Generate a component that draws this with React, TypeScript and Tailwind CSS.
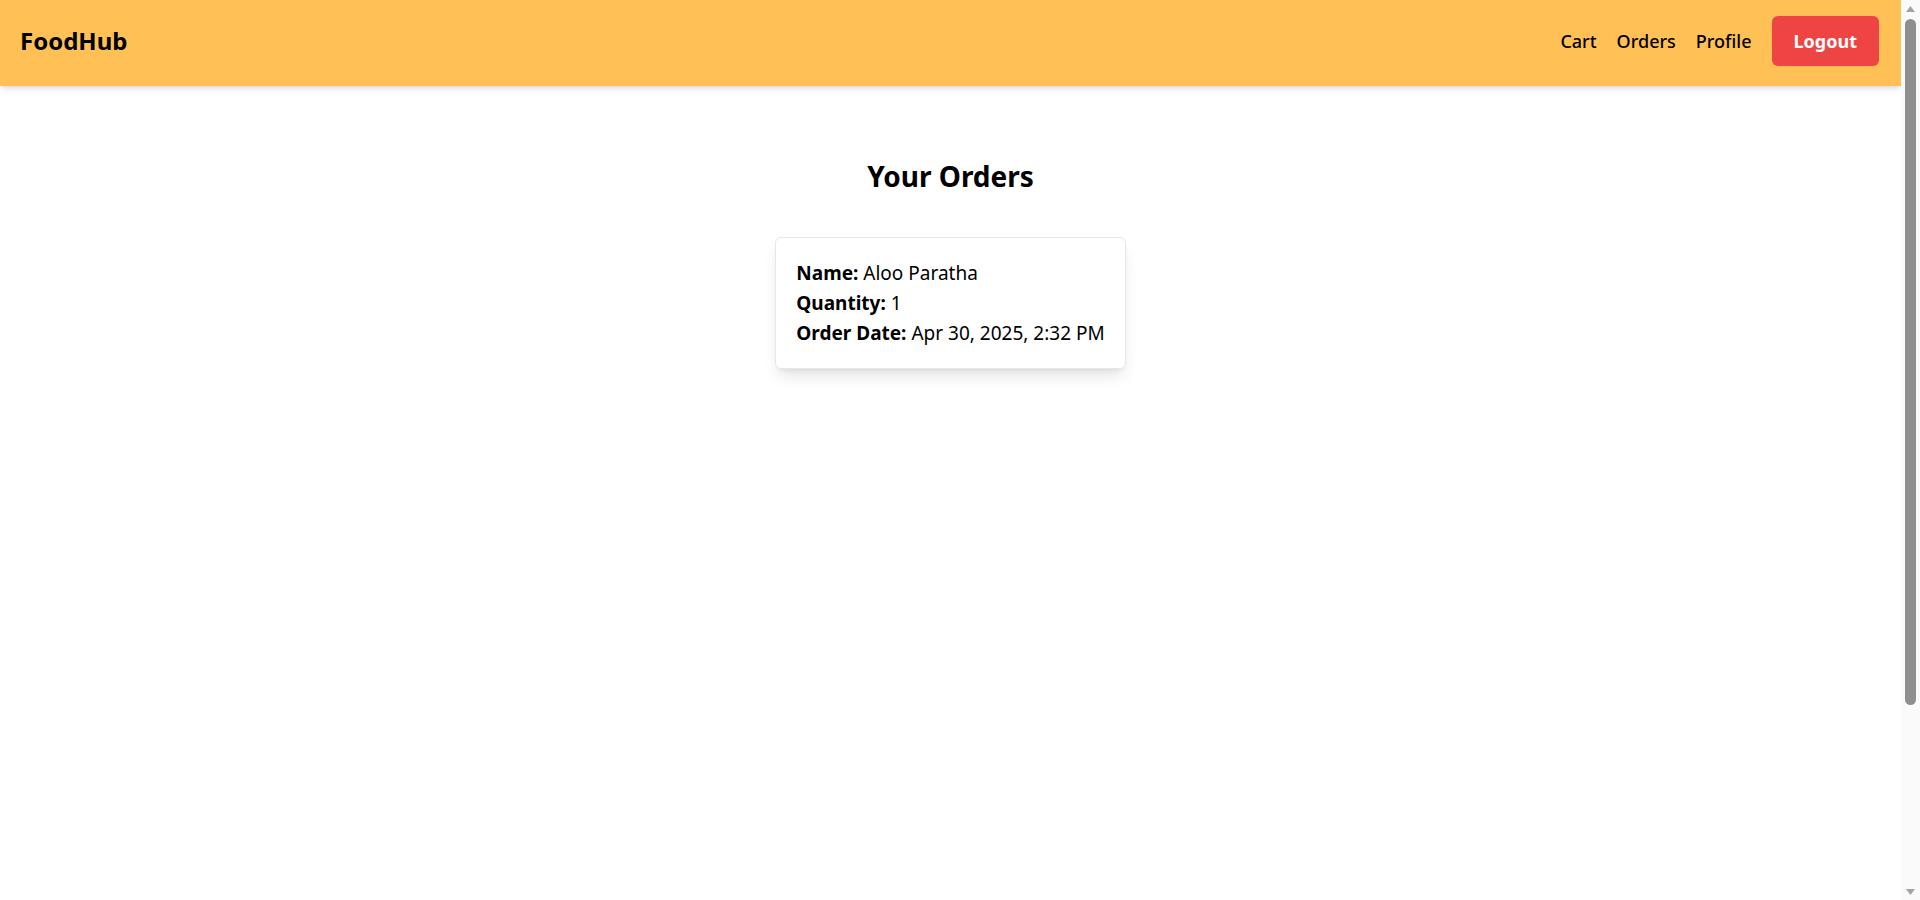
import React from 'react';

interface Order {
  id: number;
  name: string;
  quantity: number;
  date: string;
}

const orders: Order[] = [
  { id: 1, name: 'Aloo Paratha', quantity: 1, date: 'Apr 30, 2025, 2:32 PM' },
];

const font = { fontFamily: '"Noto Sans", "Open Sans", Arial, sans-serif' };

const Navbar: React.FC = () => (
  <nav className="w-full h-[86px] bg-[#ffc155] shadow-md flex items-center justify-between pl-[20px] pr-[22px] pb-[4px]">
    <span className="text-2xl font-bold text-black">FoodHub</span>
    <div className="flex items-center gap-5">
      <a className="text-lg font-medium text-black cursor-pointer">Cart</a>
      <a className="text-lg font-medium text-black cursor-pointer">Orders</a>
      <a className="text-lg font-medium text-black cursor-pointer">Profile</a>
      <button className="h-[50px] px-[22px] rounded-md bg-[#ef4444] text-white text-lg font-bold">Logout</button>
    </div>
  </nav>
);

// classic window scrollbar look, as in the screenshot
const ScrollTrack: React.FC = () => (
  <aside className="w-[19px] h-screen bg-[#fafafa] flex flex-col items-center">
    <svg width="11" height="8" viewBox="0 0 11 8" className="mt-[5px] shrink-0">
      <path d="M5.5 1 L10 7 L1 7 Z" fill="#a3a3a3" />
    </svg>
    <div className="w-[11px] h-[686px] mt-[6px] rounded-full bg-[#8f8f8f]" />
    <div className="flex-1" />
    <svg width="11" height="8" viewBox="0 0 11 8" className="mb-[4px] shrink-0">
      <path d="M1 1 L10 1 L5.5 7 Z" fill="#a3a3a3" />
    </svg>
  </aside>
);

const App: React.FC = () => {
  return (
    <div className="flex h-screen overflow-hidden bg-white text-black" style={font}>
      <div className="flex-1 min-w-0">
        <Navbar />
        <main className="flex flex-col items-center pt-[73px]">
          <h2 className="text-[28px] font-bold leading-[34px]">Your Orders</h2>
          <div className="mt-[44px] flex flex-col items-center gap-4">
            {orders.map((order) => (
              <div
                key={order.id}
                className="w-fit bg-white border border-gray-200 rounded-md shadow-lg p-5 text-[19px] leading-[30px]"
              >
                <p><span className="font-bold">Name:</span> {order.name}</p>
                <p><span className="font-bold">Quantity:</span> {order.quantity}</p>
                <p><span className="font-bold">Order Date:</span> {order.date}</p>
              </div>
            ))}
          </div>
        </main>
      </div>
      <ScrollTrack />
    </div>
  );
};

export default App;
